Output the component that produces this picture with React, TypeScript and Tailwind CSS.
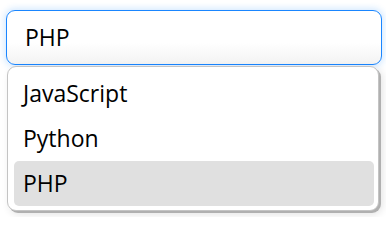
const options = ["JavaScript", "Python", "PHP"];

export default function App() {
  const selected = "PHP";
  return (
    <div className="w-[386px] h-[217px] bg-white pt-[10px] pl-[6px] font-['Open_Sans','Noto_Sans',sans-serif] text-black">
      <div className="w-[376px] h-[55px] rounded-[9px] border border-[#1a86ff] bg-gradient-to-b from-white from-60% to-[#f3f3f3] shadow-[0_0_6px_2px_rgba(30,140,255,0.18)] flex items-center pl-[18px] text-[23px]">
        {selected}
      </div>
      <div className="ml-[1px] mt-[1px] w-[372px] rounded-[9px] border border-[#c4c4c4] bg-white shadow-[2px_2px_0_0_#b0b0b0,3px_3px_8px_rgba(0,0,0,0.12)] p-[4px] pl-[6px] pr-[4px]">
        {options.map((o) => (
          <div
            key={o}
            className={`h-[45px] flex items-center pl-[9px] rounded-[5px] text-[23px] ${o === selected ? "bg-[#e0e0e0]" : ""}`}
          >
            {o}
          </div>
        ))}
      </div>
    </div>
  );
}
